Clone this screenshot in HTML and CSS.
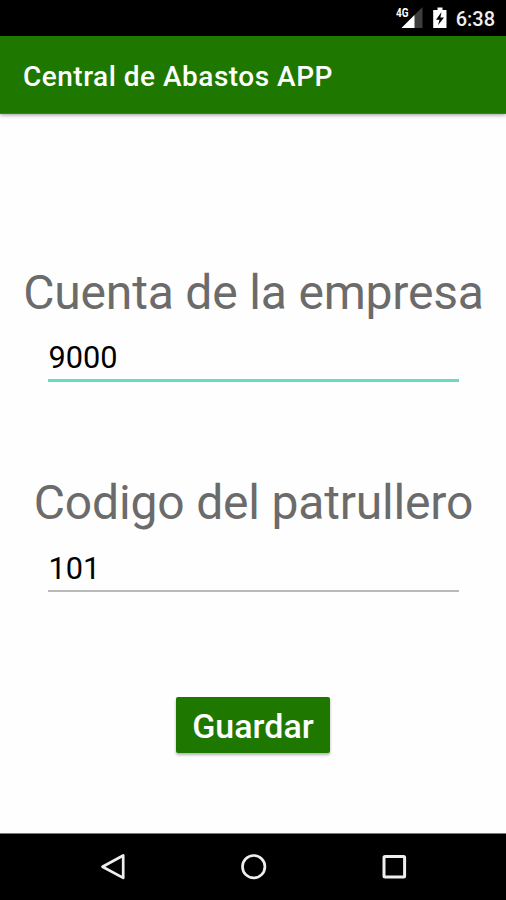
FILE: index.html
```html
<!DOCTYPE html>
<html lang="es">
<head>
<meta charset="utf-8">
<title>Central de Abastos APP</title>
<link rel="stylesheet" href="styles.css">
</head>
<body>
<div class="status-bar">
  <svg class="status-icons" width="54" height="24" viewBox="0 0 54 24">
    <path d="M26.500 2V23H5.500Z" fill="#3d3d3d"/>
    <path d="M18.500 10V23H5.500Z" fill="#fff"/>
    <path d="M0 0h14v12.500h-14z" fill="#000"/>
    <text class="network" x="0" y="12" textLength="12.500" lengthAdjust="spacingAndGlyphs">4G</text>
    <path d="M41.500 2.500h5v2.500h4V23H37.200V5h4.300z" fill="#fff"/>
    <path d="M45.500 7L40 14.700h3.500L42 20.300l6-7.700h-3.600z" fill="#000"/>
  </svg>
  <span class="clock">6:38</span>
</div>
<header class="app-bar"><h1 class="app-title">Central de Abastos APP</h1></header>
<main class="form">
  <label class="label" for="account">Cuenta de la empresa</label>
  <input class="field field-active" id="account" value="9000">
  <label class="label label-second" for="code">Codigo del patrullero</label>
  <input class="field" id="code" value="101">
  <button class="save" type="button">Guardar</button>
</main>
<nav class="nav-bar">
  <svg width="28" height="30" viewBox="0 0 28 30"><path d="M24.200 3.500V25.900L3.500 14.700Z" fill="none" stroke="#eee" stroke-width="2.700" stroke-linejoin="round"/></svg>
  <svg width="28" height="30" viewBox="0 0 28 30"><circle cx="13.700" cy="14.700" r="11.200" fill="none" stroke="#eee" stroke-width="2.700"/></svg>
  <svg width="28" height="30" viewBox="0 0 28 30"><rect x="4" y="4.500" width="20.600" height="20.600" rx="1" fill="none" stroke="#eee" stroke-width="3"/></svg>
</nav>
</body>
</html>
```
FILE: styles.css
```css
* { box-sizing: border-box; }
body {
  margin: 0;
  height: 900px;
  display: flex;
  flex-direction: column;
  background: #fefefe;
  font-family: Roboto, sans-serif;
  overflow: hidden;
}
.status-bar {
  height: 36px;
  padding: 2px 11px 0 0;
  display: flex;
  align-items: center;
  justify-content: flex-end;
  gap: 6px;
  background: #000;
}
.status-icons { margin-top: -4px; }
.network { font: 700 12.5px Roboto, sans-serif; fill: #fff; }
.clock {
  color: #eee;
  font-size: 20px;
  font-weight: 500;
  line-height: 24px;
}
.app-bar {
  height: 78px;
  padding: 4px 23px 0;
  display: flex;
  align-items: center;
  background: #1e7800;
  border-bottom: 1px solid #3d7a2b;
  box-shadow: 0 1px 4px rgba(0, 0, 0, .4);
}
.app-title {
  margin: 0;
  color: #fff;
  font-size: 28px;
  font-weight: 500;
  line-height: 34px;
  letter-spacing: .5px;
  white-space: nowrap;
}
.form {
  flex: 1;
  display: flex;
  flex-direction: column;
  align-items: center;
  padding-top: 151px;
}
.label {
  height: 56px;
  padding-left: 1px;
  color: #6b6b6b;
  font-size: 48px;
  line-height: 56px;
  letter-spacing: -.18px;
  white-space: nowrap;
}
.label-second { margin-top: 93px; }
.field {
  width: 411px;
  height: 43px;
  margin-top: 18px;
  padding: 1px 0 4px 1px;
  border: 0;
  border-bottom: 2px solid #b9b9b9;
  border-radius: 0;
  outline: 0;
  background: transparent;
  color: #000;
  font: 400 30.7px/36px Roboto, sans-serif;
}
.field-active {
  margin-top: 17px;
  height: 44px;
  border-bottom: 3px solid #65dcc4;
}
.save {
  width: 154px;
  height: 56px;
  margin-top: 105px;
  padding: 1px 0 0;
  border: 0;
  border-radius: 2px;
  background: #1e7800;
  box-shadow: 0 2px 3px rgba(0, 0, 0, .3);
  color: #fff;
  font: 500 34px/40px Roboto, sans-serif;
}
.nav-bar {
  height: 67px;
  padding: 0 98px 0 99px;
  display: flex;
  align-items: center;
  justify-content: space-between;
  background: #000;
  border-top: 1px solid #777;
}
```
